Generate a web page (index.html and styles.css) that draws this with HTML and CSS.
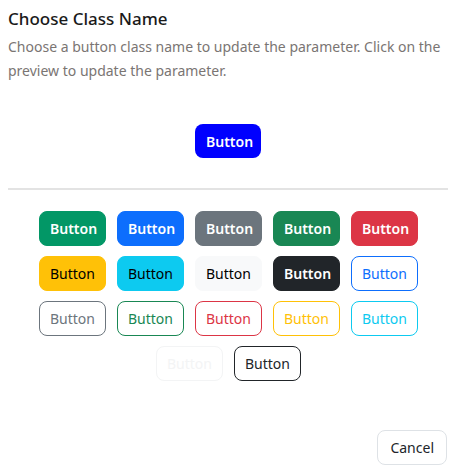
FILE: index.html
```html
<!DOCTYPE html>
<html>
<head>
<meta charset="utf-8">
<link rel="stylesheet" href="styles.css">
</head>
<body>
<div class="dialog">
  <h1 class="title">Choose Class Name</h1>
  <p class="desc">Choose a button class name to update the parameter. Click on the preview to update the parameter.</p>
  <div class="preview">
    <button class="btn btn-preview">Button</button>
  </div>
  <hr class="divider">
  <div class="grid">
    <button class="btn btn-teal">Button</button>
    <button class="btn btn-primary">Button</button>
    <button class="btn btn-secondary">Button</button>
    <button class="btn btn-success">Button</button>
    <button class="btn btn-danger">Button</button>
    <button class="btn btn-warning">Button</button>
    <button class="btn btn-info">Button</button>
    <button class="btn btn-light">Button</button>
    <button class="btn btn-dark">Button</button>
    <button class="btn btn-o-primary">Button</button>
    <button class="btn btn-o-secondary">Button</button>
    <button class="btn btn-o-success">Button</button>
    <button class="btn btn-o-danger">Button</button>
    <button class="btn btn-o-warning">Button</button>
    <button class="btn btn-o-info">Button</button>
    <button class="btn btn-o-light">Button</button>
    <button class="btn btn-o-dark">Button</button>
  </div>
  <div class="footer">
    <button class="btn btn-cancel">Cancel</button>
  </div>
</div>
</body>
</html>
```

FILE: styles.css
```css
* { box-sizing: border-box; }
html, body { margin: 0; padding: 0; background: #fff; }
body { font-family: "Noto Sans", "Open Sans", sans-serif; color: #212529; }
.dialog { padding: 8px 5px 8px 8px; display: flex; flex-direction: column; }
.title { margin: 0; font-size: 17px; line-height: 22px; font-weight: 500; color: #1a1a1a; }
.desc { margin: 5px 0 0; font-size: 14px; line-height: 24px; color: #7a7573; }
.preview { display: flex; justify-content: center; margin-top: 41px; }
.divider { margin: 30px 0 0; border: 0; height: 2px; background: #e3e3e3; }
.grid { display: flex; flex-wrap: wrap; justify-content: center; gap: 10px 11px; margin: 21px 18px 0; padding-left: 1px; }
.btn { font-family: inherit; font-size: 14px; line-height: 21px; padding: 6px 10px; border: 1px solid transparent; border-radius: 8px; width: 67px; background: transparent; font-weight: 400; cursor: pointer; }
.btn-preview { background: #0000ff; color: #fff; font-weight: 600; height: 34px; width: 66px; }
.btn-teal { background: #029766; border-color: #029766; color: #fff; font-weight: 600; }
.btn-primary { background: #0d6efd; border-color: #0d6efd; color: #fff; font-weight: 600; }
.btn-secondary { background: #6c757d; border-color: #6c757d; color: #fff; font-weight: 600; }
.btn-success { background: #198754; border-color: #198754; color: #fff; font-weight: 600; }
.btn-danger { background: #dc3545; border-color: #dc3545; color: #fff; font-weight: 600; }
.btn-warning { background: #ffc107; border-color: #ffc107; color: #000; }
.btn-info { background: #0dcaf0; border-color: #0dcaf0; color: #000; }
.btn-light { background: #f8f9fa; border-color: #f8f9fa; color: #000; }
.btn-dark { background: #212529; border-color: #212529; color: #fff; font-weight: 600; }
.btn-o-primary { border-color: #0d6efd; color: #0d6efd; }
.btn-o-secondary { border-color: #6c757d; color: #6c757d; }
.btn-o-success { border-color: #198754; color: #198754; }
.btn-o-danger { border-color: #dc3545; color: #dc3545; }
.btn-o-warning { border-color: #ffc107; color: #ffc107; }
.btn-o-info { border-color: #0dcaf0; color: #0dcaf0; }
.btn-o-light { border-color: #f3f4f5; color: #f3f4f5; }
.btn-o-dark { border-color: #212529; color: #212529; }
.footer { display: flex; justify-content: flex-end; margin-top: 49px; }
.btn-cancel { border-color: #dee2e6; color: #212529; width: auto; padding: 6px 12px; height: 35px; margin-right: 1px; }
```
